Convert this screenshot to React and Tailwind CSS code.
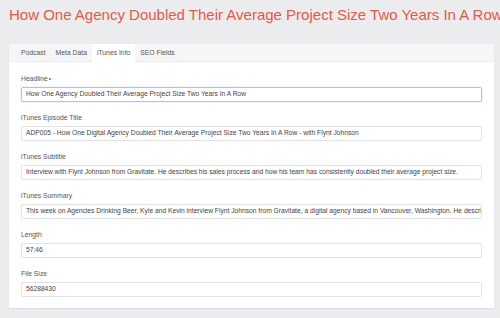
import React from "react";

const fields = [
  { label: "Headline", required: true, value: "How One Agency Doubled Their Average Project Size Two Years In A Row", focus: true },
  { label: "iTunes Episode Title", value: "ADP005 - How One Digital Agency Doubled Their Average Project Size Two Years In A Row - with Flynt Johnson" },
  { label: "iTunes Subtitle", value: "Interview with Flynt Johnson from Gravitate. He describes his sales process and how his team has consistently doubled their average project size." },
  { label: "iTunes Summary", value: "This week on Agencies Drinking Beer, Kyle and Kevin interview Flynt Johnson from Gravitate, a digital agency based in Vancouver, Washington. He describes his sales process." },
  { label: "Length", value: "57:46" },
  { label: "File Size", value: "56288430" },
];

const tabs = ["Podcast", "Meta Data", "iTunes Info", "SEO Fields"];

const Field = ({ label, required, value, focus }) => (
  <div className="mb-[11px] last:mb-0">
    <div className="h-[10px] mb-[3px] text-[6.8px] leading-[10px] text-[#555]">
      {label}
      {required && <span className="text-[#e0403a] ml-[1px]">•</span>}
    </div>
    <div
      className={`h-[15px] px-[4px] flex items-center bg-white rounded-[2px] border overflow-hidden whitespace-nowrap text-[6.7px] text-[#444] ${
        focus ? "border-[#a6c8e6] shadow-[0_0_2px_rgba(102,160,220,0.35)]" : "border-[#e2e2e2]"
      }`}
    >
      {value}
    </div>
  </div>
);

export default function App() {
  return (
    <div
      className="w-[500px] h-[318px] bg-[#ebecee] overflow-hidden"
      style={{ fontFamily: '"Liberation Sans", Arial, sans-serif' }}
    >
      <h1 className="pl-[9px] pt-[5px] h-[44px] text-[15px] leading-[20px] text-[#e55a46] whitespace-nowrap overflow-hidden">
        How One Agency Doubled Their Average Project Size Two Years In A Row
      </h1>
      <div className="ml-[9px] w-[485px] bg-white shadow-[0_1px_1px_rgba(0,0,0,0.06)]">
        <div className="h-[18px] bg-[#f6f6f6] border-b border-[#ececec] flex pl-[7px]">
          {tabs.map((t) => (
            <div
              key={t}
              className={`h-[18px] px-[5px] flex items-center text-[6.8px] text-[#555] ${
                t === "iTunes Info" ? "bg-white" : ""
              }`}
            >
              {t}
            </div>
          ))}
        </div>
        <div className="pt-[12px] pb-[11px] px-[12px]">
          {fields.map((f) => (
            <Field key={f.label} {...f} />
          ))}
        </div>
      </div>
    </div>
  );
}
